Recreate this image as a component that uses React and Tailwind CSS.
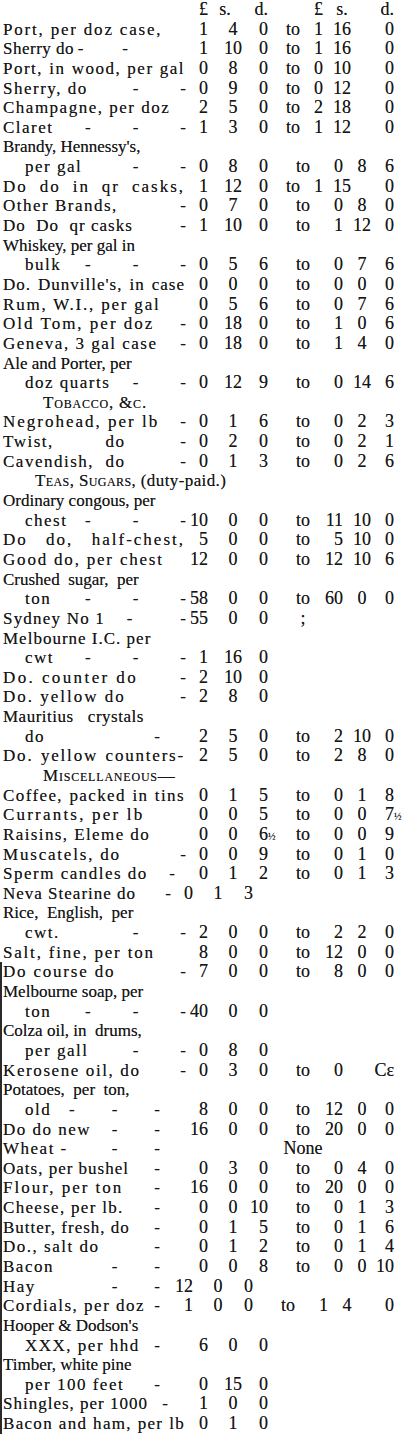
import React from 'react'

// column layouts: label, £, s, d, to, £, s, d
const GRID = {
  d: 'grid-cols-[190px_18px_50px_10px_70px_5px_38px_13px]',
  t: 'grid-cols-[190px_18px_50px_10px_50px_5px_38px_33px]',
  s: 'grid-cols-[175px_18px_50px_10px_70px_5px_38px_28px]',
}

// where the run of dashes stops, and how wide apart they sit
const DASH = {
  a: 'pr-[4px] gap-[42px]',
  b: 'pr-[30px] gap-[37px]',
  c: 'pr-[62px] gap-[39px]',
  f: 'pr-[15px] gap-[37px]',
  g: 'pr-[22px] gap-[37px]',
}

const CELL = [
  'flex justify-end',
  'flex justify-center',
  'flex justify-end',
  'flex justify-center',
  'flex justify-end',
  'flex justify-center',
  'flex justify-end',
]

const ROW = 'h-[19.65px] leading-[19.65px] whitespace-nowrap'

// j: spaced out to meet the figures, t: own letter spacing
const TOP = [
  { l: 'Port, per doz case,', g: 't', t: 'tracking-[1.8px]', v: '1 4 0 to 1 16 0' },
  { l: 'Sherry do', n: 2, p: 'c', g: 't', t: 'tracking-[0.5px]', v: '1 10 0 to 1 16 0' },
  { l: 'Port, in wood, per gal', g: 't', j: 1, t: 'tracking-[1.5px]', v: '0 8 0 to 0 10 0' },
  { l: 'Sherry, do', n: 2, g: 't', v: '0 9 0 to 0 12 0' },
  { l: 'Champagne, per doz', g: 't', v: '2 5 0 to 2 18 0' },
  { l: 'Claret', n: 3, g: 't', v: '1 3 0 to 1 12 0' },
  { l: "Brandy, Hennessy's," },
  { l: 'per gal', ind: 1, n: 2, v: '0 8 0 to 0 8 6' },
  { l: 'Do do in qr casks,', g: 't', j: 1, t: 'tracking-[2px]', v: '1 12 0 to 1 15 0' },
  { l: 'Other Brands,', n: 1, v: '0 7 0 to 0 8 0' },
  { l: 'Do  Do  qr casks', n: 1, t: 'tracking-[1px]', v: '1 10 0 to 1 12 0' },
  { l: 'Whiskey, per gal in' },
  { l: 'bulk', ind: 1, n: 3, v: '0 5 6 to 0 7 6' },
  { l: "Do. Dunville's, in case", j: 1, t: 'tracking-[1px]', v: '0 0 0 to 0 0 0' },
  { l: 'Rum, W.I., per gal', t: 'tracking-[1.8px]', v: '0 5 6 to 0 7 6' },
  { l: 'Old Tom, per doz', n: 1, t: 'tracking-[2px]', v: '0 18 0 to 1 0 6' },
  { l: 'Geneva, 3 gal case', n: 1, v: '0 18 0 to 1 4 0' },
  { l: 'Ale and Porter, per' },
  { l: 'doz quarts', ind: 1, n: 2, v: '0 12 9 to 0 14 6' },
  { h: 'tobacco' },
  { l: 'Negrohead, per lb', n: 1, t: 'tracking-[2px]', v: '0 1 6 to 0 2 3' },
  { l: 'Twist,         do', n: 1, v: '0 2 0 to 0 2 1' },
  { l: 'Cavendish,  do', n: 1, v: '0 1 3 to 0 2 6' },
  { h: 'teas' },
  { l: 'Ordinary congous, per' },
  { l: 'chest', ind: 1, n: 3, v: '10 0 0 to 11 10 0' },
  { l: 'Do do, half-chest,', j: 1, t: 'tracking-[2px]', v: '5 0 0 to 5 10 0' },
  { l: 'Good do, per chest', t: 'tracking-[1.8px]', v: '12 0 0 to 12 10 6' },
  { l: 'Crushed  sugar,  per' },
  { l: 'ton', ind: 1, n: 3, v: '58 0 0 to 60 0 0' },
  { l: 'Sydney No 1    -', n: 1, t: 'tracking-[1.2px]', v: '55 0 0 ;' },
  { l: 'Melbourne I.C. per', x: 'tracking-[1px]' },
  { l: 'cwt', ind: 1, n: 3, v: '1 16 0' },
  { l: 'Do. counter do', n: 1, t: 'tracking-[2.4px]', v: '2 10 0' },
  { l: 'Do. yellow do', n: 1, t: 'tracking-[2px]', v: '2 8 0' },
  { l: 'Mauritius   crystals', x: 'tracking-[0.5px]' },
  { l: 'do', ind: 1, n: 1, p: 'b', v: '2 5 0 to 2 10 0' },
  { l: 'Do. yellow counters-', j: 1, t: 'tracking-[1.8px]', v: '2 5 0 to 2 8 0' },
  { h: 'misc' },
  { l: 'Coffee, packed in tins', j: 1, t: 'tracking-[1.4px]', v: '0 1 5 to 0 1 8' },
  { l: 'Currants, per lb', t: 'tracking-[2.2px]', v: '0 0 5 to 0 0 7½' },
  { l: 'Raisins, Eleme do', t: 'tracking-[1.4px]', v: '0 0 6½ to 0 0 9' },
  { l: 'Muscatels, do', n: 1, t: 'tracking-[1.8px]', v: '0 0 9 to 0 1 0' },
  { l: 'Sperm candles do', n: 1, p: 'f', v: '0 1 2 to 0 1 3' },
  { l: 'Neva Stearine do', n: 1, g: 's', t: 'tracking-[1px]', v: '0 1 3' },
  { l: 'Rice,  English,  per' },
  { l: 'cwt.', ind: 1, n: 2, v: '2 0 0 to 2 2 0' },
  { l: 'Salt, fine, per ton', t: 'tracking-[1.8px]', v: '8 0 0 to 12 0 0' },
]

const BOTTOM = [
  { l: 'Do course do', n: 1, t: 'tracking-[1.8px]', v: '7 0 0 to 8 0 0' },
  { l: 'Melbourne soap, per' },
  { l: 'ton', ind: 1, n: 3, v: '40 0 0' },
  { l: 'Colza oil, in  drums,' },
  { l: 'per gall', ind: 1, n: 2, v: '0 8 0' },
  { l: 'Kerosene oil, do', n: 1, t: 'tracking-[1.6px]', v: '0 3 0 to 0 _ Cε' },
  { l: 'Potatoes,  per  ton,' },
  { l: 'old', ind: 1, n: 3, p: 'b', v: '8 0 0 to 12 0 0' },
  { l: 'Do do new', n: 2, p: 'b', v: '16 0 0 to 20 0 0' },
  { l: 'Wheat -', n: 2, p: 'b', v: '_ _ _ None' },
  { l: 'Oats, per bushel', n: 1, p: 'b', t: 'tracking-[1px]', v: '0 3 0 to 0 4 0' },
  { l: 'Flour, per ton', n: 1, p: 'b', t: 'tracking-[2px]', v: '16 0 0 to 20 0 0' },
  { l: 'Cheese, per lb.', n: 1, p: 'b', t: 'tracking-[1.3px]', v: '0 0 10 to 0 1 3' },
  { l: 'Butter, fresh, do', n: 1, p: 'b', t: 'tracking-[1px]', v: '0 1 5 to 0 1 6' },
  { l: 'Do., salt do', n: 1, p: 'b', v: '0 1 2 to 0 1 4' },
  { l: 'Bacon', n: 2, p: 'b', v: '0 0 8 to 0 0 10' },
  { l: 'Hay', n: 2, p: 'f', g: 's', v: '12 0 0' },
  { l: 'Cordials, per doz', n: 1, p: 'f', g: 's', v: '1 0 0 to 1 4 0' },
  { l: "Hooper & Dodson's" },
  { l: 'XXX, per hhd', ind: 1, n: 1, p: 'b', v: '6 0 0' },
  { l: 'Timber, white pine' },
  { l: 'per 100 feet', ind: 1, n: 1, p: 'b', v: '0 15 0' },
  { l: 'Shingles, per 1000', n: 1, p: 'g', t: 'tracking-[1px]', v: '1 0 0' },
  { l: 'Bacon and ham, per lb', j: 1, t: 'tracking-[1.3px]', v: '0 1 0' },
]

function Value({ t }) {
  if (t === '_') return null
  if (t.endsWith('½')) {
    return (
      <span>
        {t.slice(0, -1)}
        <span className="inline-block w-0 text-[10px] leading-none">½</span>
      </span>
    )
  }
  return <span>{t}</span>
}

function Heading({ kind }) {
  if (kind === 'tobacco') {
    return <div className={`${ROW} pl-[43px] tracking-[0.8px] [font-variant:small-caps]`}>Tobacco, &amp;c.</div>
  }
  if (kind === 'teas') {
    return (
      <div className={`${ROW} pl-[35px] tracking-[0.4px]`}>
        <span className="[font-variant:small-caps]">Teas, Sugars,</span> (duty-paid.)
      </div>
    )
  }
  return <div className={`${ROW} pl-[43px] tracking-[0.8px] [font-variant:small-caps]`}>Miscellaneous—</div>
}

function Line({ r }) {
  if (r.h) return <Heading kind={r.h} />

  if (!r.v) {
    return <div className={`${ROW} pl-[3px] whitespace-pre ${r.x || ''}`}>{r.l}</div>
  }

  const track = r.t || 'tracking-[1.5px]'
  const text = r.j ? (
    <span className={`flex-1 pr-[5px] [text-align-last:justify] ${track}`}>{r.l}</span>
  ) : (
    <span className={`whitespace-pre ${track}`}>{r.l}</span>
  )

  const vals = r.v.split(' ')
  return (
    <div className={`${ROW} grid ${GRID[r.g || 'd']}`}>
      <div className={`flex items-center ${r.ind ? 'pl-[25px]' : 'pl-[3px]'}`}>
        {text}
        {r.n ? (
          <div className={`flex flex-1 justify-end ${DASH[r.p || 'a']}`}>
            {Array.from({ length: r.n }).map((_, i) => (
              <span key={i}>-</span>
            ))}
          </div>
        ) : null}
      </div>
      {CELL.map((c, i) => (
        <div key={i} className={`${c} text-[18px]`}>
          {vals[i] ? <Value t={vals[i]} /> : null}
        </div>
      ))}
    </div>
  )
}

export default function App() {
  return (
    <div className="w-[404px] h-[1434px] overflow-hidden bg-white text-[#161616] text-[17px] font-['Liberation_Serif','Times_New_Roman',serif] [text-shadow:0_0_0.6px_rgba(0,0,0,0.55)]">
      {/* column heads */}
      <div className={`${ROW} grid grid-cols-[190px_18px_34px_26px_42px_13px_38px_33px] text-[18px]`}>
        <div />
        <div className="flex justify-end">£</div>
        <div className="flex justify-center">s.</div>
        <div className="flex justify-end">d.</div>
        <div />
        <div className="flex justify-end">£</div>
        <div className="flex justify-center">s.</div>
        <div className="flex justify-end">d.</div>
      </div>

      {TOP.map((r, i) => (
        <Line key={i} r={r} />
      ))}

      {/* column rule down the left edge */}
      <div className="shadow-[inset_2px_0_0_#2a2a2a]">
        {BOTTOM.map((r, i) => (
          <Line key={i} r={r} />
        ))}
      </div>
    </div>
  )
}
